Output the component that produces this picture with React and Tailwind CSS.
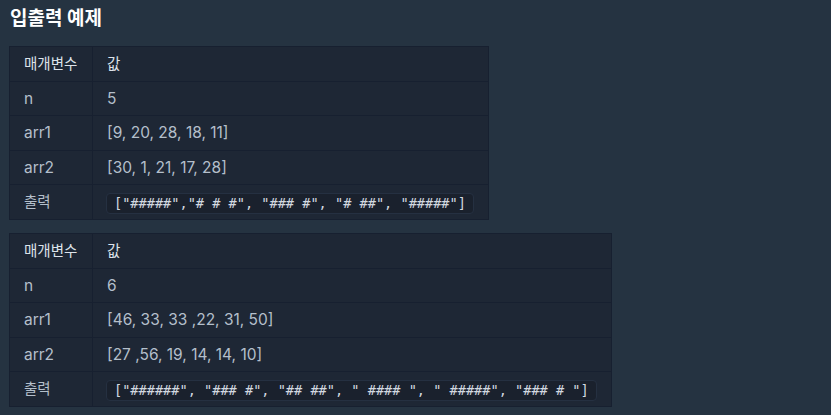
const examples = [
  { n: '5', arr1: '[9, 20, 28, 18, 11]', arr2: '[30, 1, 21, 17, 28]', out: '["#####","# # #", "### #", "# ##", "#####"]' },
  { n: '6', arr1: '[46, 33, 33 ,22, 31, 50]', arr2: '[27 ,56, 19, 14, 14, 10]', out: '["######", "### #", "## ##", " #### ", " #####", "### # "]' },
];

function ExampleTable({ ex }) {
  const td = 'border border-[#172030] px-[14px] h-[34.6px] py-0 align-middle';
  return (
    <table className="border-collapse bg-[#1e2735] text-[15.5px] text-[#b4bfcb] mb-[13px]">
      <thead>
        <tr>
          <th className={`${td} w-[83px] text-left font-normal text-[14.5px] text-[#dde3ea]`}>매개변수</th>
          <th className={`${td} text-left font-normal text-[14.5px] text-[#dde3ea]`}>값</th>
        </tr>
      </thead>
      <tbody>
        <tr><td className={td}>n</td><td className={td}>{ex.n}</td></tr>
        <tr><td className={td}>arr1</td><td className={td}>{ex.arr1}</td></tr>
        <tr><td className={td}>arr2</td><td className={td}>{ex.arr2}</td></tr>
        <tr>
          <td className={`${td} text-[14.5px]`}>출력</td>
          <td className={`${td} pl-[13px] pr-[14px]`}>
            <code className="inline-block whitespace-pre rounded-[4px] border border-[#253041] bg-[#1a212d] px-[7px] leading-[19px] text-[13.6px] text-[#d3d9e0] [font-family:'DejaVu_Sans_Mono',monospace]">
              {ex.out}
            </code>
          </td>
        </tr>
      </tbody>
    </table>
  );
}

export default function App() {
  return (
    <div className="min-h-[415px] w-[831px] bg-[#253341] pl-[9px] pt-[5px] [font-family:Inter,'Noto_Sans_CJK_KR',sans-serif]">
      <h5 className="mb-[14px] pl-[1px] text-[19px] font-bold leading-[27px] text-white">입출력 예제</h5>
      {examples.map((ex, i) => (
        <ExampleTable key={i} ex={ex} />
      ))}
    </div>
  );
}
